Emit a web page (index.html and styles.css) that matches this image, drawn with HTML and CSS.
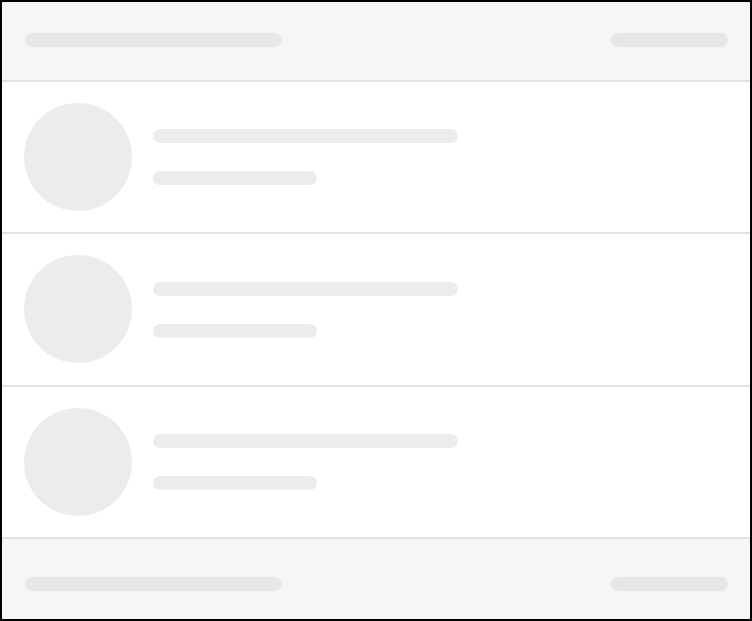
FILE: index.html
```html
<!DOCTYPE html>
<html lang="en">
<head>
    <meta charset="UTF-8">
    <meta name="viewport" content="width=device-width, initial-scale=1.0">
    <title>Loading list</title>
    <link rel="stylesheet" href="styles.css">
</head>
<body>
    <div class="frame">
        <div class="bar-row header">
            <div class="line wide"></div>
            <div class="line narrow"></div>
        </div>
        <div class="list">
            <div class="item">
                <div class="avatar"></div>
                <div class="lines">
                    <div class="line long"></div>
                    <div class="line short"></div>
                </div>
            </div>
            <div class="item">
                <div class="avatar"></div>
                <div class="lines">
                    <div class="line long"></div>
                    <div class="line short"></div>
                </div>
            </div>
            <div class="item">
                <div class="avatar"></div>
                <div class="lines">
                    <div class="line long"></div>
                    <div class="line short"></div>
                </div>
            </div>
        </div>
        <div class="bar-row footer">
            <div class="line wide"></div>
            <div class="line narrow"></div>
        </div>
    </div>
</body>
</html>
```

FILE: styles.css
```css
* {
    box-sizing: border-box;
}
body {
    margin: 0;
    background-color: #fff;
    font-family: "Liberation Sans", Arial, sans-serif;
}
.frame {
    width: 752px;
    height: 621px;
    border: 2px solid #000;
    display: flex;
    flex-direction: column;
    background-color: #fff;
}
.bar-row {
    display: flex;
    justify-content: space-between;
    background-color: #f6f6f6;
    padding: 0 22px 0 23px;
}
.header {
    height: 79.5px;
    align-items: center;
    padding-bottom: 1px;
    border-bottom: 2px solid #e2e2e2;
}
.footer {
    flex-grow: 1;
    align-items: flex-start;
    padding-top: 37.5px;
}
.line {
    height: 14px;
    border-radius: 7px;
    background-color: #ececec;
}
.bar-row .line {
    background-color: #e7e7e7;
}
.wide {
    width: 257px;
}
.narrow {
    width: 117px;
}
.item {
    height: 152.5px;
    display: flex;
    align-items: center;
    gap: 21px;
    padding: 0 22px;
    border-bottom: 2px solid #e2e2e2;
}
.avatar {
    width: 108px;
    height: 108px;
    border-radius: 50%;
    background-color: #ececec;
    flex-shrink: 0;
}
.lines {
    display: flex;
    flex-direction: column;
    gap: 28px;
    padding-top: 1px;
}
.long {
    width: 305px;
}
.short {
    width: 164px;
}
```
